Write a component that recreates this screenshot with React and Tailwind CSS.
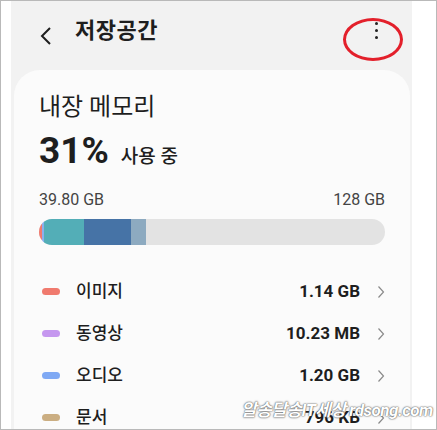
import React from 'react';

const items = [
  { name: '이미지', size: '1.14 GB', color: 'bg-[#f07a6e]' },
  { name: '동영상', size: '10.23 MB', color: 'bg-[#c597ef]' },
  { name: '오디오', size: '1.20 GB', color: 'bg-[#7fa9f4]' },
  { name: '문서', size: '796 KB', color: 'bg-[#cbae82]' },
];

const Chevron = () => (
  <svg width="8" height="14" viewBox="0 0 8 14" className="ml-[17px] shrink-0">
    <path d="M1.5 1.5 L6.5 7 L1.5 12.5" fill="none" stroke="#8a8a8a" strokeWidth="1.2" />
  </svg>
);

export default function App() {
  return (
    <div
      className="relative w-[437px] h-[430px] overflow-hidden border border-[#b9b9b9] bg-white flex pl-[10px]"
      style={{ fontFamily: 'Roboto, "Noto Sans CJK KR", sans-serif' }}
    >
      <div className="w-[401px] h-full bg-[#f2f2f2] flex flex-col">
        {/* Header */}
        <div className="h-[69px] shrink-0 flex items-center pl-[28px] pr-[30px] relative">
          <svg width="14" height="20" viewBox="0 0 14 20">
            <path d="M11 2 L3 10 L11 18" fill="none" stroke="#1e1e1e" strokeWidth="2" />
          </svg>
          <span className="ml-[22px] text-[22px] font-bold text-[#1e1e1e] tracking-[0.5px] -mt-[10px]">저장공간</span>
          <div className="ml-auto flex flex-col gap-[4px] -mt-[10px] mr-[4px]">
            <span className="w-[3px] h-[3px] rounded-full bg-[#222]" />
            <span className="w-[3px] h-[3px] rounded-full bg-[#222]" />
            <span className="w-[3px] h-[3px] rounded-full bg-[#222]" />
          </div>
          <div className="absolute left-[332px] top-[17px] w-[60px] h-[43px] rounded-[50%] border-[3px] border-[#e3202b]" />
        </div>

        {/* Card */}
        <div className="flex-1 ml-[3px] mr-[2px] rounded-t-[26px] bg-[#fbfbfb] px-[25px] pt-[21px]">
          <div className="text-[24px] leading-[32px] text-[#1e1e1e]">내장 메모리</div>
          <div className="flex items-baseline mt-[6px]">
            <span className="text-[37px] leading-[44px] font-bold text-[#1e1e1e]">31%</span>
            <span className="ml-[12px] text-[19px] font-medium text-[#1e1e1e]">사용 중</span>
          </div>
          <div className="flex justify-between mt-[17px] text-[16px] leading-[20px] text-[#444]">
            <span>39.80 GB</span>
            <span>128 GB</span>
          </div>
          <div className="mt-[9px] h-[26px] rounded-full bg-[#e3e3e3] overflow-hidden flex">
            <div className="w-[3px] bg-[#f07a6e]" />
            <div className="w-[2px] bg-[#8ab0ee]" />
            <div className="w-[40px] bg-[#53aeb7]" />
            <div className="w-[47px] bg-[#4673a6]" />
            <div className="w-[15px] bg-[#8daac0]" />
          </div>

          <div className="mt-[35px] flex flex-col gap-[19px]">
            {items.map((it) => (
              <div key={it.name} className="flex items-center h-[23px]">
                <span className={`w-[18px] h-[7px] rounded-full ml-[3px] ${it.color}`} />
                <span className="ml-[16px] text-[17px] font-medium text-[#1e1e1e]">{it.name}</span>
                <span className="ml-auto text-[17px] font-bold text-[#1e1e1e]">{it.size}</span>
                <Chevron />
              </div>
            ))}
          </div>
        </div>
      </div>

      <div className="absolute left-[240px] top-[398px] whitespace-nowrap italic font-bold text-[17px] leading-[22px] text-white [text-shadow:0_0_2px_#555,0_0_1px_#555] tracking-[-0.5px]">
        알송달송IT세상 rdsong.com
      </div>
    </div>
  );
}
